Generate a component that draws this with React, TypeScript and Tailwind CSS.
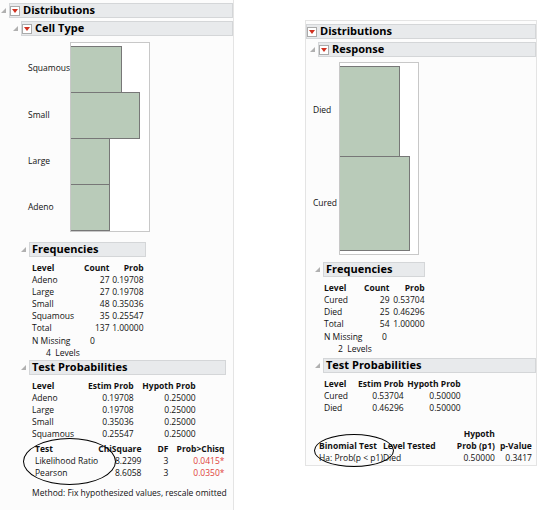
import React from "react";

const Tri = () => (
  <svg width="7" height="7" viewBox="0 0 7 7" className="mr-[2px] shrink-0"><path d="M6 1 L6 6 L1 6 Z" fill="#b0b0b0" /></svg>
);
const Red = () => (
  <span className="inline-flex items-center justify-center w-[10px] h-[10px] border border-[#aaa] bg-white mr-[3px] shrink-0">
    <svg width="6" height="4" viewBox="0 0 6 4"><path d="M0 0 H6 L3 4 Z" fill="#d03020" /></svg>
  </span>
);
const Header = ({ title, red, w, cls = "", tri = true }: { title: string; red?: boolean; w: string; cls?: string; tri?: boolean }) => (
  <div className={`flex items-center ${cls}`}>
    {tri && <Tri />}
    <div className={`flex items-center h-[15px] bg-[#e8eaec] border border-[#d4d6d8] font-bold text-[11px] text-black ${w}`}>
      {red && <Red />}
      {!red && <span className="w-[2px]" />}
      {title}
    </div>
  </div>
);

const Chart = ({ bars, h, lw }: { bars: { label: string; w: number; h: number }[]; h: number; lw: string }) => (
  <div className="flex">
    <div className={`flex flex-col ${lw} pt-[3px]`}>
      {bars.map((b) => (
        <div key={b.label} className="flex items-center text-[8.5px]" style={{ height: b.h }}>{b.label}</div>
      ))}
    </div>
    <div className="border border-[#c8c8c8] w-[80px] bg-white pt-[3px]" style={{ height: h }}>
      {bars.map((b, i) => (
        <div key={b.label} className={`bg-[#b9cbb9] border border-[#777] border-l-0 ${i > 0 ? "-mt-px" : ""}`} style={{ width: b.w, height: b.h + (i > 0 ? 1 : 0) }} />
      ))}
    </div>
  </div>
);

const T = ({ rows, cols, cls }: { rows: (string | React.ReactNode)[][]; cols: string[]; cls?: string }) => (
  <table className={`text-[8.5px] leading-[12px] border-collapse ${cls ?? ""}`}>
    <tbody>
      {rows.map((r, i) => (
        <tr key={i} className={i === 0 ? "font-bold" : ""}>
          {r.map((c, j) => (
            <td key={j} className={`${cols[j]} whitespace-nowrap p-0`}>{c}</td>
          ))}
        </tr>
      ))}
    </tbody>
  </table>
);

const red = (s: string) => <span className="text-[#e0413a]">{s}</span>;

export default function App() {
  return (
    <div className="w-[537px] h-[510px] bg-white relative text-[#111]" style={{ fontFamily: "'Open Sans','Noto Sans',sans-serif" }}>
      <div className="flex items-start">
        {/* Left */}
        <div className="w-[234px] h-[510px] border-r border-[#e4e4e4] bg-[#fcfcfc] pt-[3px]">
          <Header title="Distributions" red w="w-[226px]" />
          <div className="ml-[12px] mt-[3px]">
            <Header title="Cell Type" red w="w-[212px]" />
            <div className="ml-[16px] mt-[6px]">
              <Chart lw="w-[42px]" h={190} bars={[
                { label: "Squamous", w: 51, h: 47 },
                { label: "Small", w: 69, h: 46 },
                { label: "Large", w: 39, h: 46 },
                { label: "Adeno", w: 39, h: 46 },
              ]} />
            </div>
            <div className="ml-[8px] mt-[10px]">
              <Header title="Frequencies" w="w-[117px]" />
              <div className="ml-[12px] mt-[5px]">
                <T cols={["w-[52px]", "w-[23px] text-right", "w-[34px] text-right"]} rows={[
                  ["Level", "Count", "Prob"],
                  ["Adeno", "27", "0.19708"],
                  ["Large", "27", "0.19708"],
                  ["Small", "48", "0.35036"],
                  ["Squamous", "35", "0.25547"],
                  ["Total", "137", "1.00000"],
                ]} />
                <div className="text-[8.5px] leading-[12px] mt-[1px] flex"><span className="w-[58px]">N Missing</span><span>0</span></div>
                <div className="text-[8.5px] leading-[11px] ml-[14px]">4&nbsp; Levels</div>
              </div>
              <div className="mt-[2px]">
                <Header title="Test Probabilities" w="w-[197px]" />
              </div>
              <div className="ml-[12px] mt-[5px]">
                <T cols={["w-[56px]", "w-[32px] text-right", "w-[62px] text-right"]} rows={[
                  ["Level", "Estim Prob", "Hypoth Prob"],
                  ["Adeno", "0.19708", "0.25000"],
                  ["Large", "0.19708", "0.25000"],
                  ["Small", "0.35036", "0.25000"],
                  ["Squamous", "0.25547", "0.25000"],
                ]} />
                <div className="relative mt-[3px] ml-[3px]">
                  <div className="absolute -left-[12px] -top-[5px] w-[93px] h-[47px] border border-black rounded-[50%]" />
                  <T cols={["w-[62px]", "w-[43px] text-right", "w-[27px] text-right", "w-[56px] text-right"]} rows={[
                    ["Test", "ChiSquare", "DF", "Prob>Chisq"],
                    ["Likelihood Ratio", "8.2299", "3", red("0.0415*")],
                    ["Pearson", "8.6058", "3", red("0.0350*")],
                  ]} />
                </div>
                <div className="text-[8.5px] mt-[8px]">Method: Fix hypothesized values, rescale omitted</div>
              </div>
            </div>
          </div>
        </div>
        {/* Right */}
        <div className="ml-[71px] mt-[20px] w-[232px] h-[446px] border border-[#e4e4e4] bg-[#fcfcfc] pt-[3px]">
          <Header title="Distributions" red tri={false} w="w-[230px]" />
          <div className="ml-[3px] mt-[3px]">
            <Header title="Response" red w="w-[219px]" />
            <div className="ml-[4px] mt-[5px]">
              <Chart lw="w-[26px]" h={193} bars={[
                { label: "Died", w: 60, h: 91 },
                { label: "Cured", w: 70, h: 94 },
              ]} />
            </div>
            <div className="ml-[5px] mt-[7px]">
              <Header title="Frequencies" w="w-[102px]" />
              <div className="ml-[10px] mt-[5px]">
                <T cols={["w-[40px]", "w-[24px] text-right", "w-[35px] text-right"]} rows={[
                  ["Level", "Count", "Prob"],
                  ["Cured", "29", "0.53704"],
                  ["Died", "25", "0.46296"],
                  ["Total", "54", "1.00000"],
                ]} />
                <div className="text-[8.5px] leading-[12px] mt-[1px] flex"><span className="w-[58px]">N Missing</span><span>0</span></div>
                <div className="text-[8.5px] leading-[11px] ml-[14px]">2&nbsp; Levels</div>
              </div>
              <div className="mt-[4px]">
                <Header title="Test Probabilities" w="w-[213px]" />
              </div>
              <div className="ml-[10px] mt-[5px]">
                <T cols={["w-[34px]", "w-[40px] text-right", "w-[57px] text-right"]} rows={[
                  ["Level", "Estim Prob", "Hypoth Prob"],
                  ["Cured", "0.53704", "0.50000"],
                  ["Died", "0.46296", "0.50000"],
                ]} />
                <div className="relative mt-[14px] -ml-[5px]">
                  <div className="absolute -left-[5px] top-[6px] w-[80px] h-[33px] border border-black rounded-[50%]" />
                  <T cols={["w-[56px] align-bottom", "w-[56px] align-bottom", "w-[56px] text-right align-bottom", "w-[37px] text-right align-bottom"]} rows={[
                    ["", "", "Hypoth", ""],
                    ["Binomial Test", "Level Tested", "Prob (p1)", "p-Value"],
                    [<span className="font-normal">Ha: Prob(p &lt; p1)</span>, <span className="font-normal">Died</span>, <span className="font-normal">0.50000</span>, <span className="font-normal">0.3417</span>],
                  ].map((r, i) => i === 1 ? r.map((c, k) => <b key={k}>{c}</b>) : r)} />
                </div>
              </div>
            </div>
          </div>
        </div>
      </div>
    </div>
  );
}
